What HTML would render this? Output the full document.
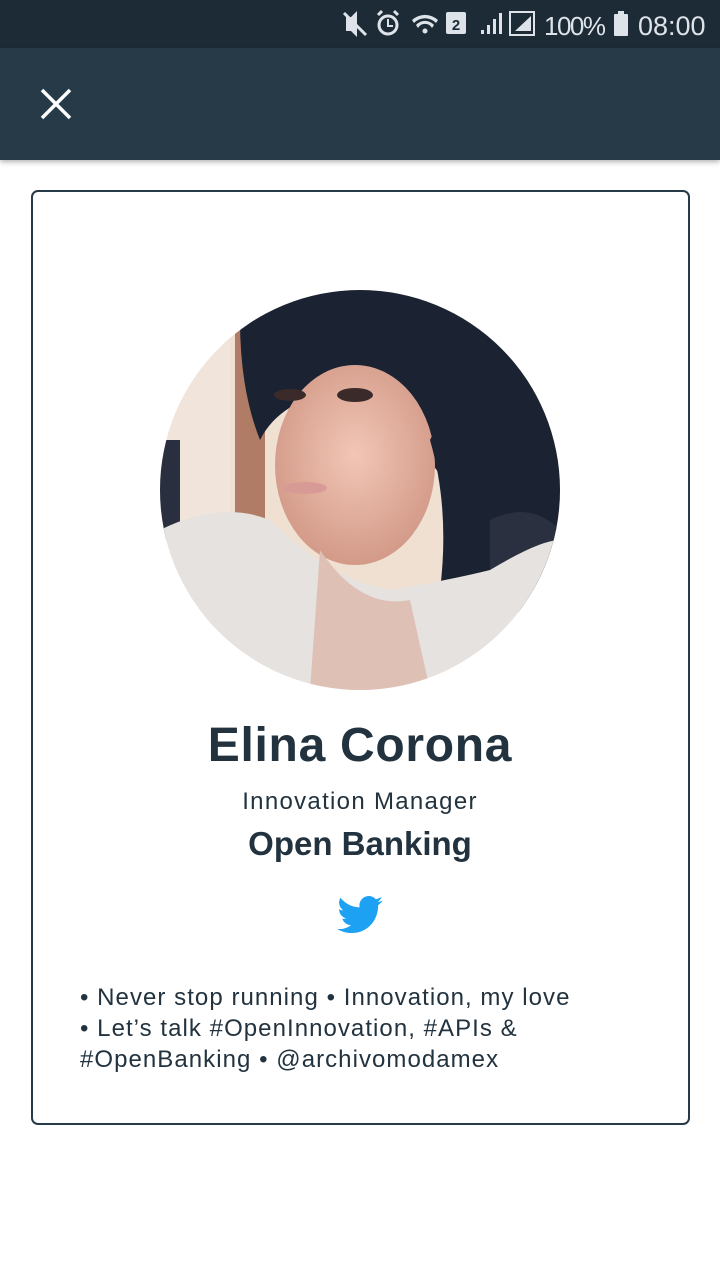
<!DOCTYPE html>
<html><head><meta charset="utf-8"><style>
*{margin:0;padding:0;box-sizing:border-box}
body{width:720px;height:1280px;background:#fff;font-family:"Liberation Sans",sans-serif;position:relative;overflow:hidden;color:#22333f}
.status{position:absolute;top:0;left:0;width:720px;height:48px;background:#1d2b36;color:#dde3e8}
.bar{position:absolute;top:48px;left:0;width:720px;height:112px;background:#263a48;box-shadow:0 2px 5px rgba(0,0,0,.3)}
.card{position:absolute;left:31px;top:190px;width:659px;height:935px;border:2px solid #263a48;border-radius:7px}
.c{position:absolute;left:0;width:720px;text-align:center}
</style></head><body>
<div class="status">
<svg width="720" height="48" style="position:absolute;left:0;top:0">
<g fill="#dde3e8">
<path d="M346 17h5l6-6v26l-6-6h-5z"/><path d="M344 13l22 22" stroke="#dde3e8" stroke-width="3"/>
<circle cx="388" cy="25" r="9" fill="none" stroke="#dde3e8" stroke-width="3"/>
<path d="M388 19v7h5" fill="none" stroke="#dde3e8" stroke-width="2"/>
<path d="M378 15l4-4M398 15l-4-4" stroke="#dde3e8" stroke-width="3"/>
<path d="M412 20a19 19 0 0 1 26 0l-2 3a15 15 0 0 0-22 0z"/>
<path d="M416 25a12 12 0 0 1 18 0l-2 3a8 8 0 0 0-14 0z"/>
<circle cx="425" cy="31" r="2.5"/>
<rect x="446" y="12" width="20" height="22" rx="2"/>
<rect x="481" y="30" width="3" height="4"/><rect x="487" y="25" width="3" height="9"/><rect x="493" y="19" width="3" height="15"/><rect x="499" y="13" width="3" height="21"/>
<rect x="510" y="12" width="24" height="23" fill="none" stroke="#dde3e8" stroke-width="2"/>
<path d="M515 31h16v-15z"/>
<rect x="614" y="14" width="14" height="22" rx="1"/><rect x="618" y="11" width="6" height="3"/>
</g>
<text x="456" y="30" font-size="15" font-weight="bold" fill="#1d2b36" text-anchor="middle" font-family="Liberation Sans">2</text>
<text x="544" y="35" font-size="26" fill="#dde3e8" font-family="Liberation Sans" textLength="62">100%</text>
<text x="638" y="35" font-size="27" fill="#dde3e8" font-family="Liberation Sans">08:00</text>
</svg>
</div>
<div class="bar"><svg width="40" height="40" style="position:absolute;left:36px;top:36px"><path d="M6 6l28 28M34 6L6 34" stroke="#fff" stroke-width="3.5"/></svg></div>
<div class="card"></div>
<svg width="400" height="400" style="position:absolute;left:160px;top:290px">
<defs><clipPath id="cp"><circle cx="200" cy="200" r="200"/></clipPath>
<radialGradient id="sk" cx="50%" cy="45%" r="55%"><stop offset="0" stop-color="#f2c6b6"/><stop offset="1" stop-color="#d39a88"/></radialGradient></defs>
<g clip-path="url(#cp)">
<rect width="400" height="400" fill="#efe0d2"/>
<rect x="0" y="0" width="70" height="400" fill="#f1e4da"/>
<rect x="0" y="150" width="20" height="100" fill="#2a2f40"/>
<rect x="75" y="40" width="30" height="200" fill="#b07c66"/>
<path d="M80 30Q150 -10 260 0Q360 20 400 120V330Q360 320 320 320Q300 250 290 200Q240 120 180 100Q120 110 100 150Q80 100 80 30z" fill="#1b2232"/>
<path d="M330 230Q370 210 400 240V300L330 300z" fill="#2a3040"/>
<ellipse cx="195" cy="175" rx="80" ry="100" fill="url(#sk)"/>
<path d="M85 50Q140 0 230 15Q290 40 310 130L300 200Q275 120 255 75Q200 50 150 70Q115 85 100 140z" fill="#1b2232"/>
<path d="M290 110Q330 180 320 310L280 300Q290 220 270 150z" fill="#1b2232"/>
<ellipse cx="130" cy="105" rx="16" ry="6" fill="#3a2a2a"/><ellipse cx="195" cy="105" rx="18" ry="7" fill="#3a2a2a"/>
<ellipse cx="145" cy="198" rx="22" ry="6" fill="#d89a95"/>
<path d="M0 240Q60 210 110 230Q170 290 230 300Q290 290 330 280Q380 250 400 250V400H0z" fill="#e6e2df"/>
<path d="M160 260Q200 320 250 310L270 400H150z" fill="#dfc0b5"/>
</g></svg>
<div class="c" style="top:718px;font-size:48px;font-weight:bold;letter-spacing:0.7px">Elina Corona</div>
<div class="c" style="top:788px;font-size:24px;letter-spacing:1.3px">Innovation Manager</div>
<div class="c" style="top:825px;font-size:33px;font-weight:bold">Open Banking</div>
<svg width="46" height="38" viewBox="0 0 24 20" style="position:absolute;left:337px;top:896px"><path fill="#1da1f2" d="M24 2.4c-.9.4-1.8.7-2.8.8 1-.6 1.8-1.6 2.2-2.7-1 .6-2 1-3.1 1.200C19.4.7 18.1 0 16.6 0c-2.7 0-4.9 2.200-4.9 4.9 0 .4 0 .8.1 1.1C7.7 5.8 4.1 3.9 1.7.9c-.4.7-.7 1.6-.7 2.5 0 1.7.9 3.2 2.2 4.1-.8 0-1.6-.2-2.2-.6v.1c0 2.4 1.7 4.4 3.9 4.8-.4.1-.8.2-1.3.2-.3 0-.6 0-.9-.1.6 2 2.4 3.4 4.6 3.4-1.7 1.3-3.8 2.1-6.1 2.1-.4 0-.8 0-1.2-.1 2.2 1.4 4.8 2.2 7.5 2.2 9.1 0 14-7.5 14-14v-.6c1-.7 1.8-1.6 2.5-2.5z"/></svg>
<div style="position:absolute;left:80px;top:982px;font-size:24px;line-height:31px;width:600px;letter-spacing:1.05px;white-space:nowrap">• Never stop running • Innovation, my love<br>• Let’s talk #OpenInnovation, #APIs &amp;<br>#OpenBanking • @archivomodamex</div>
</body></html>
